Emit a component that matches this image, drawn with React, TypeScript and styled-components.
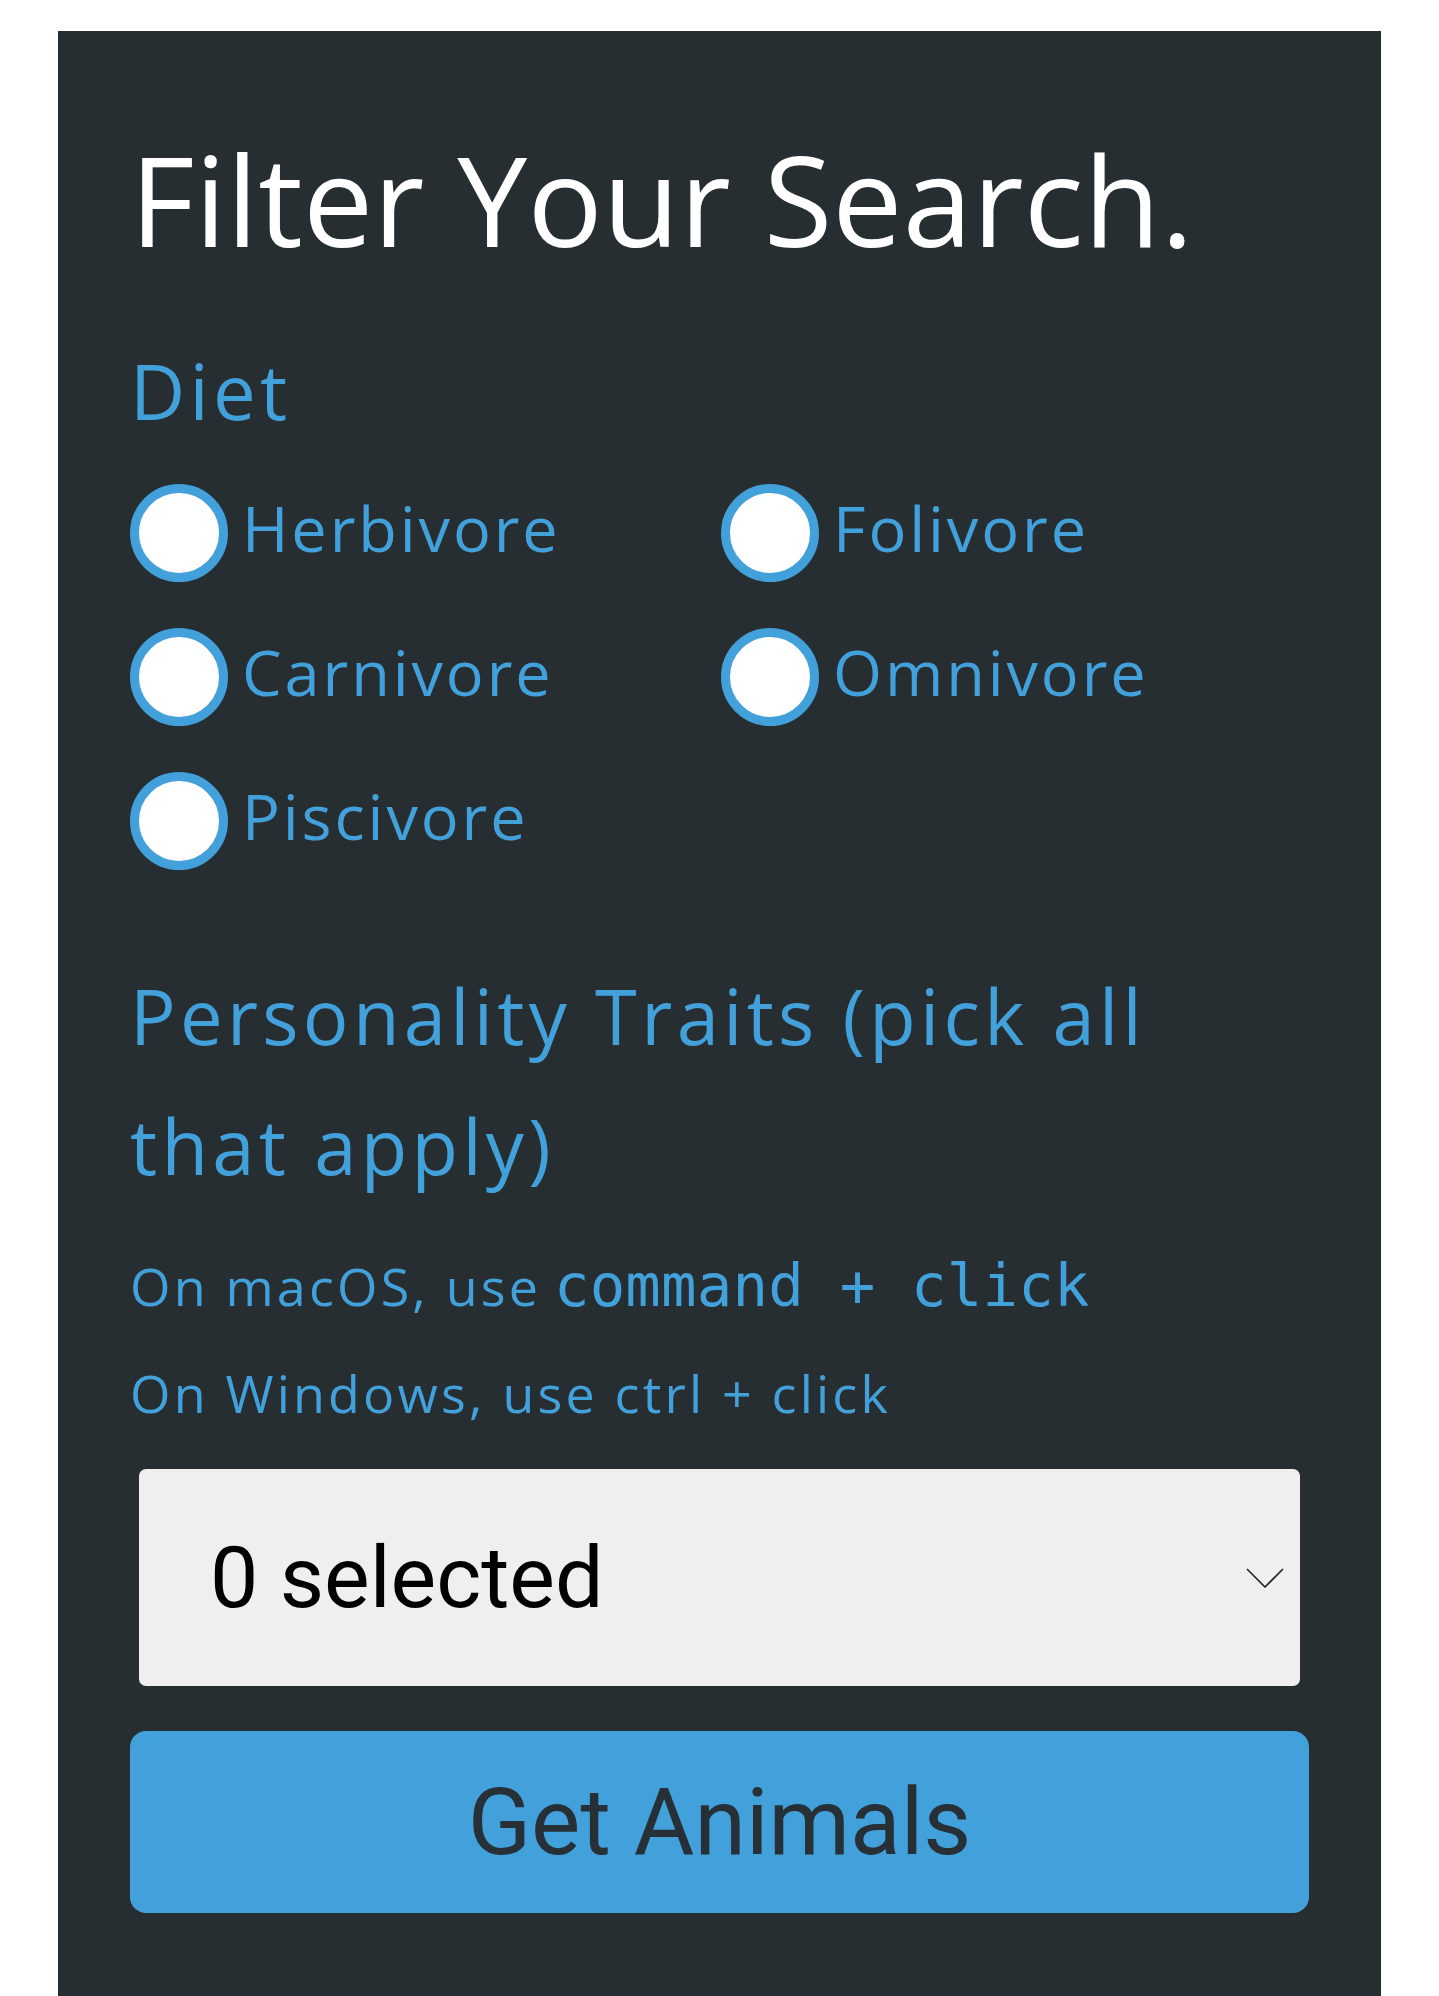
import React from "react";
import styled, { createGlobalStyle } from "styled-components";

const GlobalStyle = createGlobalStyle`
  html, body { margin: 0; padding: 0; background: #ffffff; }
  body { font-family: "Open Sans", "Noto Sans", sans-serif; }
  * { box-sizing: border-box; }
`;

const BLUE = "#42a0da";

const Panel = styled.section`
  width: 1323px;
  margin: 31px auto 0;
  background: #272e32;
  padding: 105px 72px 90px;
  display: flex;
  flex-direction: column;
`;

const Title = styled.h1`
  margin: 0;
  font-family: "Open Sans", sans-serif;
  font-weight: 500;
  font-size: 125px;
  line-height: 125px;
  color: #ffffff;
  letter-spacing: 0.2px;
`;

const SectionLabel = styled.h2<{ $top: number; $lh: number }>`
  margin: ${(p) => p.$top}px 0 0;
  font-family: "Open Sans", sans-serif;
  font-weight: 400;
  font-size: 76px;
  line-height: ${(p) => p.$lh}px;
  color: ${BLUE};
  letter-spacing: 4.3px;
`;

const RadioGrid = styled.div`
  margin-top: 55px;
  display: grid;
  grid-template-columns: 591px auto;
  row-gap: 46px;
`;

const RadioItem = styled.label`
  display: flex;
  align-items: center;
  height: 98px;
  gap: 14px;
  cursor: pointer;
`;

const RadioCircle = styled.span`
  width: 98px;
  height: 98px;
  flex: 0 0 98px;
  border-radius: 50%;
  border: 9px solid ${BLUE};
  background: #ffffff;
`;

const RadioText = styled.span`
  font-family: "Open Sans", sans-serif;
  font-size: 63px;
  line-height: 98px;
  color: ${BLUE};
  letter-spacing: 2.9px;
  margin-bottom: 10px;
`;

const Hint = styled.p<{ $top: number }>`
  margin: ${(p) => p.$top}px 0 0;
  font-family: "Open Sans", sans-serif;
  font-size: 52px;
  line-height: 107px;
  color: ${BLUE};
  letter-spacing: 3.2px;
`;

const Code = styled.code`
  font-family: "DejaVu Sans Mono", "Liberation Mono", monospace;
  font-size: 59px;
  letter-spacing: 0.2px;
  margin-left: -4px;
  color: ${BLUE};
`;

const SelectBox = styled.div`
  margin: 23px 9px 0;
  height: 217px;
  background: #efefef;
  border-radius: 7px;
  display: flex;
  align-items: center;
  justify-content: space-between;
  padding: 0 16px 0 71px;
`;

const SelectText = styled.span`
  font-family: Roboto, "Liberation Sans", sans-serif;
  font-size: 86px;
  color: #000000;
`;

const Button = styled.button`
  margin-top: 45px;
  height: 182px;
  width: 100%;
  border: none;
  border-radius: 16px;
  background: ${BLUE};
  color: #263036;
  font-family: Roboto, "Liberation Sans", sans-serif;
  font-size: 93px;
  cursor: pointer;
  padding: 0;
`;

const diets = ["Herbivore", "Folivore", "Carnivore", "Omnivore", "Piscivore"];

export default function App() {
  return (
    <>
      <GlobalStyle />
      <Panel>
        <Title>Filter Your Search.</Title>
        <SectionLabel $top={92} $lh={76}>Diet</SectionLabel>
        <RadioGrid>
          {diets.map((d) => (
            <RadioItem key={d}>
              <RadioCircle />
              <RadioText>{d}</RadioText>
            </RadioItem>
          ))}
        </RadioGrid>
        <SectionLabel $top={81} $lh={130}>
          Personality Traits (pick all that apply)
        </SectionLabel>
        <Hint $top={21}>
          On macOS, use <Code>command + click</Code>
        </Hint>
        <Hint $top={0}>On Windows, use ctrl + click</Hint>
        <SelectBox>
          <SelectText>0 selected</SelectText>
          <svg width="38" height="20" viewBox="0 0 38 20" fill="none">
            <path d="M1 1 L19 19 L37 1" stroke="#222" strokeWidth="1.6" />
          </svg>
        </SelectBox>
        <Button>Get Animals</Button>
      </Panel>
    </>
  );
}
